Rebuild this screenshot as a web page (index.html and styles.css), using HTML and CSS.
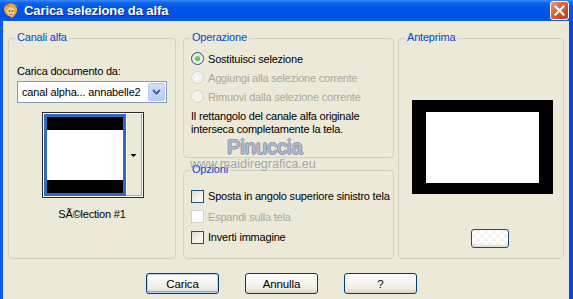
FILE: index.html
```html
<!DOCTYPE html>
<html>
<head>
<meta charset="utf-8">
<link rel="stylesheet" href="styles.css">
</head>
<body>
<div class="window">
  <div class="titlebar">
    <svg class="app-icon" viewBox="0 0 16 16" width="16" height="16">
      <path d="M3 2 C6 0 11 0 13 3 C15 6 14 10 12 12 L9 15 L6 13 C3 12 1 9 1 6 C1 4 2 3 3 2 Z" fill="#F2A23A"/>
      <path d="M5 5 C7 4 10 4 11 6 C12 9 11 12 8 13 C6 13 4 11 4 8 Z" fill="#F6D3A6"/>
      <circle cx="6.5" cy="8" r="1" fill="#2C8A3C"/>
      <circle cx="9.5" cy="8" r="1" fill="#2C8A3C"/>
      <path d="M6.5 11 Q8 12 9.5 11" stroke="#C0392B" stroke-width="1" fill="none"/>
      <path d="M2 3 L5 1 L6 3 Z" fill="#D9652B"/>
      <path d="M12 1 L15 4 L13 5 Z" fill="#3B7BD9"/>
    </svg>
    <span class="title">Carica selezione da alfa</span>
    <div class="close">
      <svg viewBox="0 0 19 19" width="19" height="19"><path d="M5.5 5.5 L13.5 13.5 M13.5 5.5 L5.5 13.5" stroke="#fff" stroke-width="2.2" stroke-linecap="square"/></svg>
    </div>
  </div>
  <div class="frame">
    <div class="groups">
      <div class="group g-canali">
        <span class="legend">Canali alfa</span>
        <div class="field-label">Carica documento da:</div>
        <div class="combo">
          <span class="combo-text">canal alpha... annabelle2</span>
          <span class="combo-btn"><svg viewBox="0 0 17 18" width="17" height="18"><path d="M5 7 L8.5 10.5 L12 7" stroke="#4D6185" stroke-width="2" fill="none"/></svg></span>
        </div>
        <div class="thumb-picker">
          <div class="thumb">
            <div class="band"></div>
            <div class="mid"></div>
            <div class="band"></div>
          </div>
          <div class="thumb-btn"><svg viewBox="0 0 15 82" width="15" height="82"><path d="M4.5 40 L10.5 40 L7.5 43 Z" fill="#000"/></svg></div>
        </div>
        <div class="caption">SÃ©lection #1</div>
      </div>
      <div class="col-mid">
        <div class="group g-op">
          <span class="legend">Operazione</span>
          <div class="opt-row first"><span class="radio checked"></span><span>Sostituisci selezione</span></div>
          <div class="opt-row disabled"><span class="radio"></span><span>Aggiungi alla selezione corrente</span></div>
          <div class="opt-row disabled"><span class="radio"></span><span>Rimuovi dalla selezione corrente</span></div>
          <div class="info">Il rettangolo del canale alfa originale<br>interseca completamente la tela.</div>
        </div>
        <div class="group g-opz">
          <span class="legend">Opzioni</span>
          <div class="chk-row first"><span class="check"></span><span>Sposta in angolo superiore sinistro tela</span></div>
          <div class="chk-row disabled"><span class="check"></span><span>Espandi sulla tela</span></div>
          <div class="chk-row"><span class="check"></span><span>Inverti immagine</span></div>
        </div>
      </div>
      <div class="group g-ante">
        <span class="legend">Anteprima</span>
        <div class="preview"><div class="preview-inner"></div></div>
        <div class="mini-btn"></div>
      </div>
    </div>
    <div class="buttons">
      <div class="btn default">Carica</div>
      <div class="btn">Annulla</div>
      <div class="btn">?</div>
    </div>
    <div class="wm-name">Pinuccia</div>
    <div class="wm-url">www.maidiregrafica.eu</div>
  </div>
</div>
</body>
</html>
```
FILE: styles.css
```css
* { box-sizing: border-box; }
html, body { margin: 0; padding: 0; }
body {
  width: 573px;
  height: 299px;
  overflow: hidden;
  font-family: "Liberation Sans", Arial, sans-serif;
  font-size: 11px;
  letter-spacing: -0.2px;
  color: #000;
  background: #ECE9D8;
}
.window {
  width: 573px;
  height: 299px;
  display: flex;
  flex-direction: column;
}
.titlebar {
  height: 21px;
  flex: none;
  display: flex;
  align-items: center;
  background: linear-gradient(#3C8CF8 0, #0D62EC 3px, #0057E6 40%, #0052E2 80%, #0B5BEA 100%);
}
.app-icon { margin-left: 3px; flex: none; }
.title {
  margin-left: 5px;
  font-weight: bold;
  font-size: 13px;
  letter-spacing: -0.1px;
  color: #fff;
  text-shadow: 1px 1px 0 #0A2A9A;
}
.close {
  margin-left: auto;
  margin-right: 4px;
  align-self: flex-start;
  margin-top: 1px;
  width: 19px;
  height: 19px;
  border: 1px solid #fff;
  border-radius: 3px;
  background: linear-gradient(135deg, #EC9A7A 0%, #DF6A43 35%, #CF4A22 70%, #C0401C 100%);
  display: flex;
  align-items: center;
  justify-content: center;
}
.close svg { display: block; margin: -1px; }
.frame {
  flex: 1;
  position: relative;
  background: #ECE9D8;
  border-left: 3px solid #0B5BEE;
  border-right: 4px solid #0846D6;
}
.groups {
  display: flex;
  padding: 17px 5px 0 5px;
}
.group {
  position: relative;
  border: 1px solid #D0D0BF;
  border-radius: 4px;
}
.legend {
  position: absolute;
  top: -8px;
  left: 6px;
  padding: 0 2px;
  background: #ECE9D8;
  color: #0046D5;
  line-height: 13px;
  white-space: nowrap;
}
.g-canali {
  width: 168px;
  height: 221px;
  padding: 0 8px;
}
.field-label {
  margin-top: 26px;
  line-height: 13px;
}
.combo {
  margin-top: 3px;
  width: 150px;
  height: 22px;
  border: 1px solid #7F9DB9;
  background: #fff;
  display: flex;
  align-items: center;
}
.combo-text {
  flex: 1;
  padding-left: 4px;
  font-size: 11px;
  letter-spacing: -0.15px;
  white-space: nowrap;
  overflow: hidden;
}
.combo-btn {
  flex: none;
  width: 17px;
  height: 18px;
  margin-right: 1px;
  border: 1px solid #B4C7F2;
  border-radius: 2px;
  background: linear-gradient(#D4E0FC, #B9CCF7);
  display: flex;
}
.combo-btn svg { display: block; margin: -1px; }
.thumb-picker {
  margin-top: 9px;
  margin-left: 25px;
  width: 102px;
  height: 86px;
  border: 1px solid #2B2B2B;
  padding: 1px;
  background: #fff;
  display: flex;
}
.thumb {
  width: 82px;
  height: 82px;
  border: 3px solid #316AC5;
  display: flex;
  flex-direction: column;
}
.band { height: 13px; background: #000; }
.mid { flex: 1; background: #fff; }
.thumb-btn {
  flex: 1;
  background: #ECE9D8;
  border-left: 1px solid #fff;
  border-right: 1px solid #ACA899;
  border-bottom: 1px solid #ACA899;
}
.thumb-btn svg { display: block; margin-left: -1px; }
.caption {
  margin-top: 10px;
  text-align: center;
  line-height: 13px;
}
.col-mid {
  margin-left: 7px;
  width: 211px;
  display: flex;
  flex-direction: column;
}
.g-op {
  height: 120px;
  padding: 0 7px;
}
.g-opz {
  margin-top: 12px;
  height: 89px;
  padding: 0 7px;
}
.opt-row {
  height: 19px;
  display: flex;
  align-items: center;
  white-space: nowrap;
}
.opt-row.first { margin-top: 10px; }
.chk-row {
  height: 20.5px;
  display: flex;
  align-items: center;
  white-space: nowrap;
}
.chk-row.first { margin-top: 15px; }
.disabled { color: #ACA899; }
.radio {
  flex: none;
  width: 13px;
  height: 13px;
  margin-right: 4px;
  border-radius: 50%;
  border: 1px solid #1C5180;
  background: linear-gradient(135deg, #DCDCD5 0%, #F2F2EE 60%, #fff 100%);
  position: relative;
}
.disabled .radio {
  border-color: #D5D3C7;
  background: #F4F3EE;
}
.radio.checked::after {
  content: "";
  position: absolute;
  left: 3px;
  top: 3px;
  width: 5px;
  height: 5px;
  border-radius: 50%;
  background: radial-gradient(circle at 40% 40%, #7BE37B, #21A121);
}
.check {
  flex: none;
  width: 13px;
  height: 13px;
  margin-right: 4px;
  border: 1px solid #1C5180;
  background: linear-gradient(135deg, #DCDCD5 0%, #F2F2EE 60%, #fff 100%);
}
.disabled .check {
  border-color: #D5D3C7;
  background: #fff;
}
.info {
  margin-top: 4px;
  line-height: 13.3px;
}
.g-ante {
  margin-left: 4px;
  width: 166px;
  height: 221px;
  padding: 0;
}
.preview {
  margin-top: 61px;
  margin-left: 13px;
  width: 141px;
  height: 94px;
  background: #000;
  padding: 12px 14px 11px 14px;
}
.preview-inner {
  width: 100%;
  height: 100%;
  background: #fff;
}
.mini-btn {
  margin-top: 35px;
  margin-left: 72px;
  width: 38px;
  height: 19px;
  border: 1px solid #1C4A80;
  border-radius: 3px;
  background:
    repeating-conic-gradient(#F4F4F4 0 25%, #FFFFFF 0 50%) 0 0 / 8px 8px;
  box-shadow: inset 0 -3px 2px -1px #E0DED5;
}
.buttons {
  display: flex;
  gap: 26px;
  margin-top: 14px;
  padding-left: 143px;
}
.btn {
  width: 73px;
  height: 21px;
  border: 1px solid #003C74;
  border-radius: 3px;
  background: linear-gradient(#FFFFFF 0%, #F5F4EE 50%, #ECEAE2 80%, #D8D2C2 100%);
  display: flex;
  align-items: center;
  justify-content: center;
  font-size: 11.5px;
  letter-spacing: -0.1px;
}
.btn.default {
  box-shadow: inset 0 0 0 1px #BCD4F6, inset 0 -1px 0 1px #89ADE4;
}
.wm-name {
  position: absolute;
  left: 224px;
  top: 116px;
  font-size: 20px;
  line-height: 20px;
  letter-spacing: 0;
  color: #B4BBCB;
  text-shadow: -1px 0 0 #8E98AE, 1px 0 0 #8E98AE, 0 -1px 0 #8E98AE, 0 1px 0 #8E98AE;
}
.wm-url {
  position: absolute;
  left: 187px;
  top: 137px;
  font-size: 12.5px;
  line-height: 13px;
  letter-spacing: 0;
  color: rgba(125, 135, 155, 0.7);
}
```
